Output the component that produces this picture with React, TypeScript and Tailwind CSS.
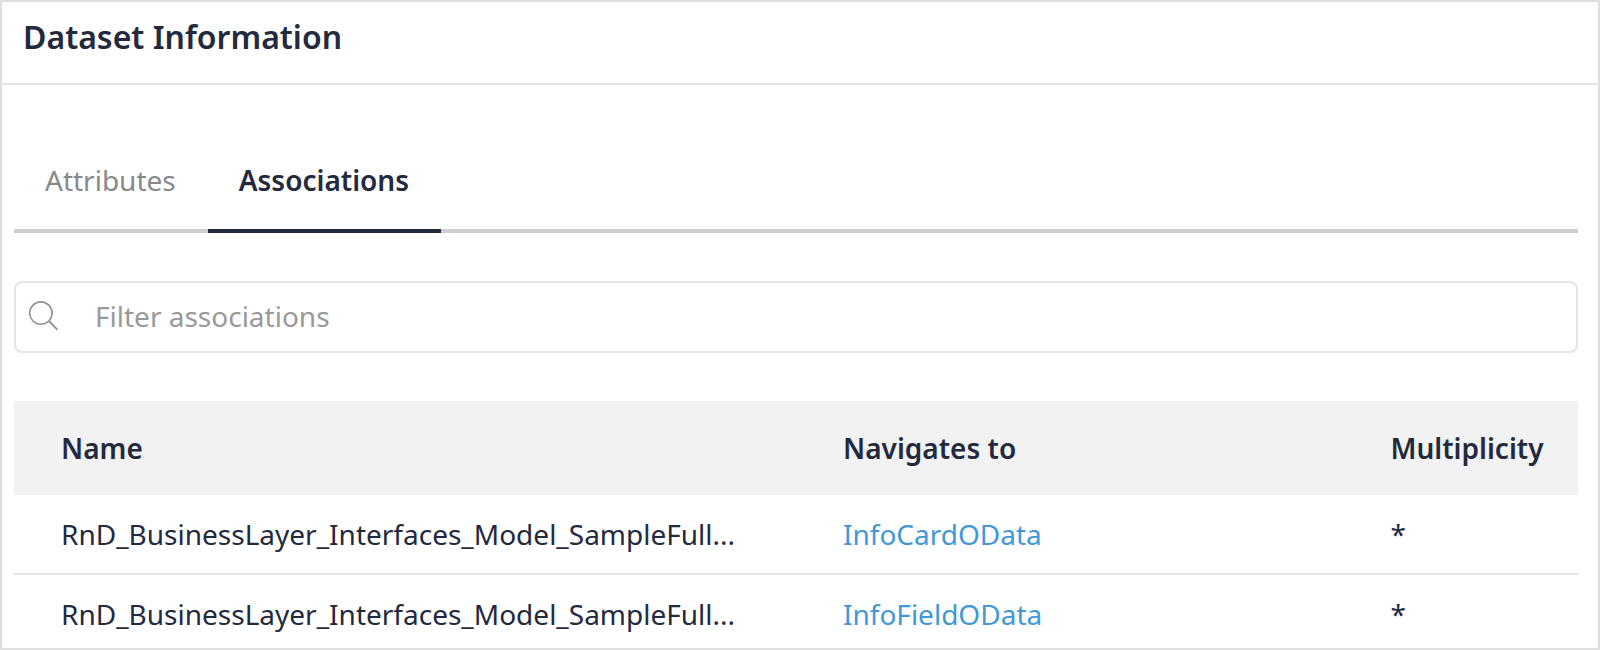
import { useState } from "react";

type Association = {
  name: string;
  target: string;
  multiplicity: string;
};

const associations: Association[] = [
  {
    name: "RnD_BusinessLayer_Interfaces_Model_SampleFull...",
    target: "InfoCardOData",
    multiplicity: "*",
  },
  {
    name: "RnD_BusinessLayer_Interfaces_Model_SampleFull...",
    target: "InfoFieldOData",
    multiplicity: "*",
  },
];

const tabs = ["Attributes", "Associations"];

function SearchIcon() {
  return (
    <svg
      viewBox="0 0 30 30"
      className="size-[30px] shrink-0"
      fill="none"
      stroke="#8f939c"
      strokeWidth="1.6"
      aria-hidden="true"
    >
      <circle cx="11.9" cy="12.1" r="11.2" />
      <path d="M19.9 20.1 L28.6 28.8" strokeWidth="1.9" />
    </svg>
  );
}

function Tabs({ active, onSelect }: { active: string; onSelect: (tab: string) => void }) {
  return (
    <div role="tablist" className="flex h-[108px] shadow-[inset_0_-4px_0_#cecfd5]">
      {tabs.map((tab) => (
        <button
          key={tab}
          type="button"
          role="tab"
          aria-selected={tab === active}
          onClick={() => onSelect(tab)}
          className={
            tab === active
              ? "border-b-4 border-[#232a3e] pt-1.5 pr-8 pl-[31px] font-semibold text-[#232a3e]"
              : "border-b-4 border-transparent pt-1.5 pr-8 pl-[31px] text-[#888888]"
          }
        >
          {tab}
        </button>
      ))}
    </div>
  );
}

export default function App() {
  const [active, setActive] = useState("Associations");
  const [filter, setFilter] = useState("");
  const rows = associations.filter((row) =>
    (row.name + row.target).toLowerCase().includes(filter.toLowerCase()),
  );

  return (
    <div className="flex h-screen flex-col overflow-hidden border-2 border-[#dfdfdf] bg-white font-['Noto_Sans',sans-serif] text-[28px] leading-[38px] text-[#232a3e]">
      <header className="border-b-2 border-[#e5e5e5] px-[21px] pt-[13px] pb-6">
        <h1 className="text-[32px] leading-[44px] font-semibold">Dataset Information</h1>
      </header>
      <main className="pt-10 pr-5 pl-3">
        <Tabs active={active} onSelect={setActive} />
        <label className="mt-12 flex h-[72px] items-center gap-9 rounded-lg border-2 border-[#e5e5e5] pr-4 pb-0.5 pl-[13px]">
          <SearchIcon />
          <input
            type="text"
            aria-label="Filter associations"
            placeholder="Filter associations"
            value={filter}
            onChange={(event) => setFilter(event.target.value)}
            className="min-w-0 flex-1 bg-transparent outline-none placeholder:text-[#999999]"
          />
        </label>
        <table className="mt-12 w-full table-fixed border-separate border-spacing-0 text-left">
          <thead>
            <tr className="h-[94px] bg-[#f2f2f2]">
              <th className="w-1/2 pl-[47px] font-semibold">Name</th>
              <th className="w-[35%] pl-[47px] font-semibold">Navigates to</th>
              <th className="w-[15%] pl-[47px] font-semibold">Multiplicity</th>
            </tr>
          </thead>
          <tbody>
            {rows.map((row) => (
              <tr key={row.target} className="h-20">
                <td className="truncate border-b-2 border-[#e5e5e5] pl-[47px]">{row.name}</td>
                <td className="border-b-2 border-[#e5e5e5] pl-[47px]">
                  <a href="#" className="text-[#4198d8]">
                    {row.target}
                  </a>
                </td>
                <td className="border-b-2 border-[#e5e5e5] pl-[47px]">{row.multiplicity}</td>
              </tr>
            ))}
          </tbody>
        </table>
      </main>
    </div>
  );
}
